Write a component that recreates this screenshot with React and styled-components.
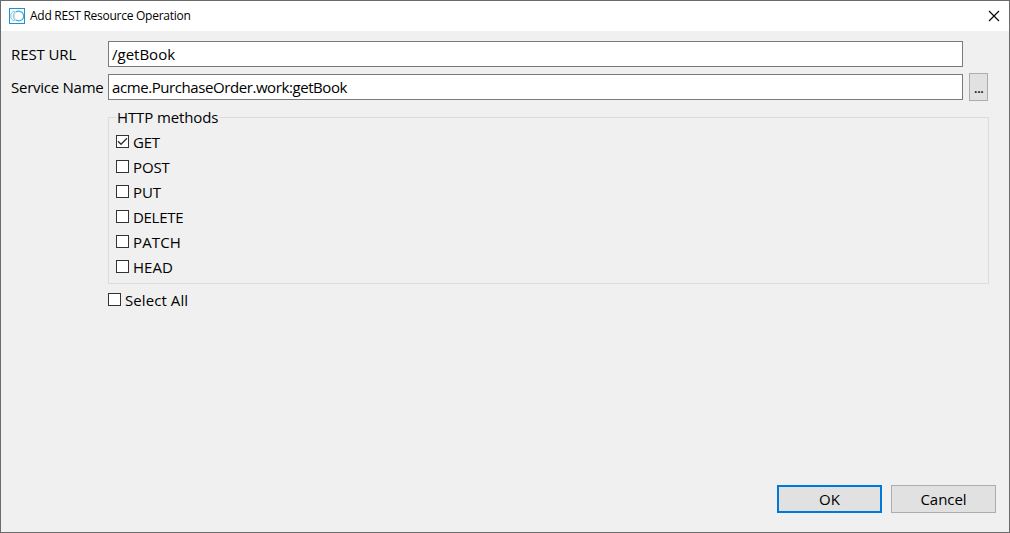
import React, { useState } from "react";
import styled, { createGlobalStyle } from "styled-components";

const GlobalStyle = createGlobalStyle`
  * { box-sizing: border-box; }
  body { margin: 0; background: #f0f0f0; }
  button, input { font: inherit; color: inherit; letter-spacing: inherit; }
`;

const Dialog = styled.main`
  width: 1010px;
  height: 533px;
  display: flex;
  flex-direction: column;
  border: 1px solid #6b6b6b;
  background: #f0f0f0;
  color: #000;
  font: 15px/20px "Open Sans", "Noto Sans", sans-serif;
  overflow: hidden;
`;

const TitleBar = styled.header`
  height: 30px;
  flex: none;
  display: flex;
  align-items: center;
  padding: 0 9px 0 8px;
  background: #fff;
`;

const Title = styled.h1`
  flex: 1;
  margin: 0 0 0 5px;
  font-size: 12px;
  line-height: 16px;
  font-weight: 400;
`;

const CloseButton = styled.button`
  display: flex;
  padding: 0;
  margin-top: -1px;
  border: 0;
  background: none;
`;

const Label = styled.span`
  white-space: pre;
  letter-spacing: ${(p) => p.$tracking || 0}px;
`;

const Body = styled.section`
  flex: 1;
  display: flex;
  flex-direction: column;
  padding: 10px 13px 19px 10px;
`;

const Form = styled.div`
  display: grid;
  grid-template-columns: 97px 855px 26px;
  grid-template-rows: 26px 28px;
  row-gap: 6px;
  align-items: center;
`;

const TextField = styled.input`
  width: 855px;
  height: 26px;
  padding: 0 3px 0 3px;
  border: 1px solid #7a7a7a;
  background: #fff;
  letter-spacing: ${(p) => p.$tracking || 0}px;
  outline: 0;
`;

const Button = styled.button`
  width: ${(p) => p.$width}px;
  height: 28px;
  padding: 0;
  display: flex;
  align-items: center;
  justify-content: center;
  border: ${(p) => (p.$primary ? "2px solid #0078d7" : "1px solid #adadad")};
  background: #e1e1e1;
`;

const BrowseButton = styled(Button)`
  margin-left: 6px;
`;

const Methods = styled.fieldset`
  width: 881px;
  height: 177px;
  margin: 6px 0 0 97px;
  padding: 2px 7px 0;
  border: 1px solid #dcdcdc;
`;

const Legend = styled.legend`
  height: 20px;
  padding: 0 1px;
  margin-left: 0;
`;

const CheckRow = styled.label`
  height: 25px;
  display: flex;
  align-items: center;
  gap: 4px;
`;

const SelectAll = styled(CheckRow)`
  margin: 3px 0 0 97px;
`;

const Box = styled.input`
  appearance: none;
  flex: none;
  width: 13px;
  height: 13px;
  margin: -1px 0 0;
  border: 1px solid #333;
  background: #fff;
`;

const BoxWrap = styled.span`
  position: relative;
  display: flex;
`;

const Tick = styled.svg`
  position: absolute;
  left: 0;
  top: -1px;
  pointer-events: none;
`;

const Actions = styled.footer`
  display: flex;
  justify-content: flex-end;
  gap: 9px;
  margin-top: auto;
`;

const AppIcon = () => (
  <svg width="16" height="16" viewBox="0 0 16 16" fill="none">
    <rect x=".5" y=".5" width="15" height="15" fill="#fff" stroke="#1a94d0" />
    <path d="M6 3.1C.2 3.5.2 12.5 6 12.9M8 3.1C3 4.6 3 11.4 8 12.9" stroke="#7cc3e0" />
    <path d="M7.2 3.9C8.4 3.2 10 3 11.2 3.4 15.8 5 15.8 11 11.2 12.6 10 13 8.4 12.8 7.2 12.1" stroke="#3ba3d2" strokeWidth="1.1" />
    <path d="M7.4 4C4.8 6 4.8 10 7.4 12" stroke="#a4d6ea" strokeWidth=".8" />
  </svg>
);

const Check = ({ label, tracking, checked, onChange, as: Row = CheckRow }) => (
  <Row>
    <BoxWrap>
      <Box type="checkbox" checked={checked} onChange={onChange} />
      {checked && (
        <Tick width="13" height="13" viewBox="0 0 13 13" fill="none" stroke="#333" strokeWidth="1.4">
          <path d="M2 6.2 5 9.2 11 3.2" />
        </Tick>
      )}
    </BoxWrap>
    <Label $tracking={tracking}>{label}</Label>
  </Row>
);

const methods = [
  ["GET", -0.2],
  ["POST", -0.1],
  ["PUT", -0.1],
  ["DELETE", -0.3],
  ["PATCH", 0.15],
  ["HEAD", 0],
];

export default function App() {
  const [selected, setSelected] = useState(["GET"]);
  const toggle = (name) =>
    setSelected((s) => (s.includes(name) ? s.filter((n) => n !== name) : [...s, name]));
  const all = selected.length === methods.length;

  return (
    <>
      <GlobalStyle />
      <Dialog>
        <TitleBar>
          <AppIcon />
          <Title><Label $tracking={-0.26}>Add REST Resource Operation</Label></Title>
          <CloseButton aria-label="Close">
            <svg width="12" height="12" viewBox="0 0 12 12" stroke="#000" strokeWidth="1.1">
              <path d="M1 1 11 11M11 1 1 11" />
            </svg>
          </CloseButton>
        </TitleBar>
        <Body>
          <Form>
            <Label $tracking={-0.1}>REST URL</Label>
            <TextField defaultValue="/getBook" />
            <span />
            <Label $tracking={-0.25}>Service Name</Label>
            <TextField $tracking={-0.42} defaultValue="acme.PurchaseOrder.work:getBook" />
            <BrowseButton $width={19}><Label $tracking={-0.8}>...</Label></BrowseButton>
          </Form>
          <Methods>
            <Legend><Label $tracking={-0.12}>HTTP methods</Label></Legend>
            {methods.map(([name, tracking]) => (
              <Check
                key={name}
                label={name}
                tracking={tracking}
                checked={selected.includes(name)}
                onChange={() => toggle(name)}
              />
            ))}
          </Methods>
          <Check
            as={SelectAll}
            label="Select All"
            tracking={0.08}
            checked={all}
            onChange={() => setSelected(all ? [] : methods.map(([n]) => n))}
          />
          <Actions>
            <Button $primary $width={105}><Label>OK</Label></Button>
            <Button $width={105}><Label $tracking={-0.05}>Cancel</Label></Button>
          </Actions>
        </Body>
      </Dialog>
    </>
  );
}
